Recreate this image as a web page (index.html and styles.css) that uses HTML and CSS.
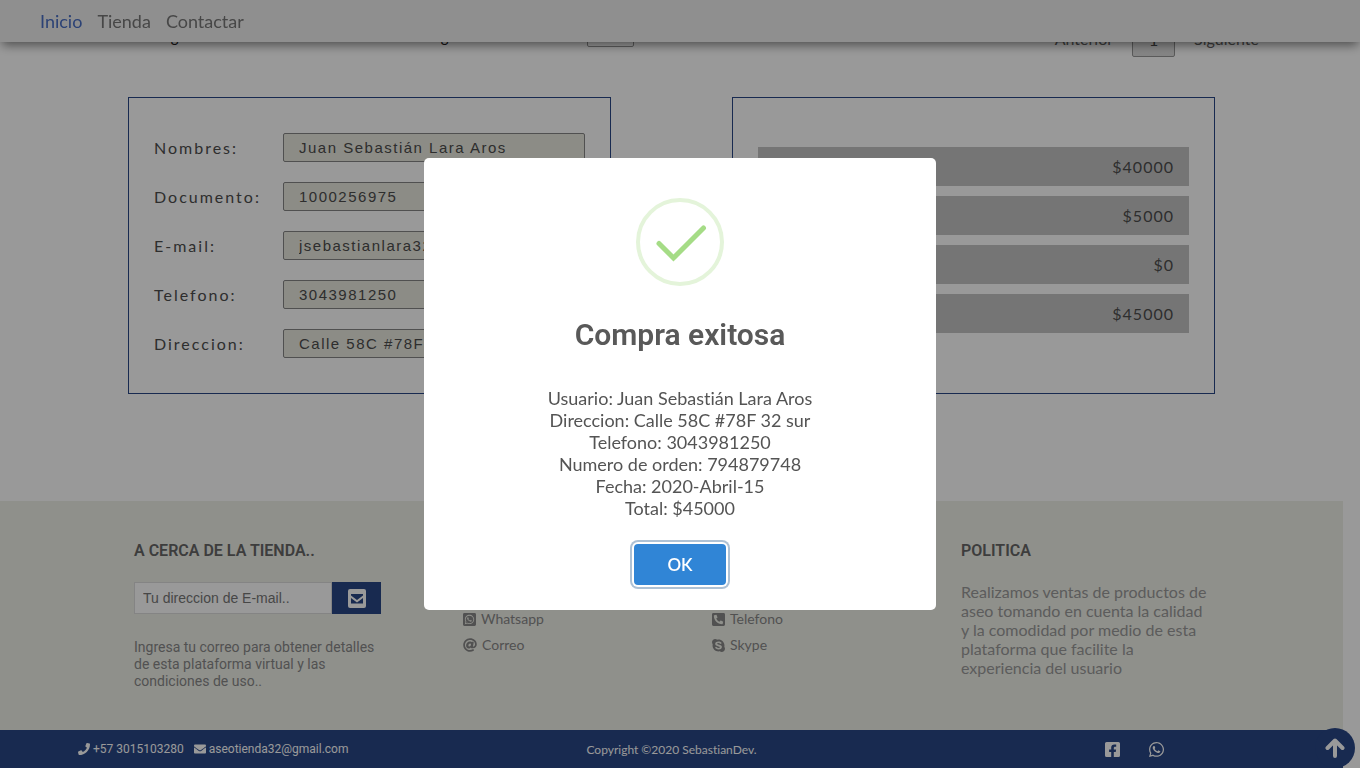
FILE: index.html
```html
<!DOCTYPE html>
<html lang="es">
<head>
<meta charset="utf-8">
<title>Tienda de aseo</title>
<link rel="stylesheet" href="styles.css">
</head>
<body>
<header class="navbar">
  <nav class="nav-links">
    <a class="nav-link active" href="#inicio">Inicio</a>
    <a class="nav-link" href="#tienda">Tienda</a>
    <a class="nav-link" href="#contactar">Contactar</a>
  </nav>
</header>

<main class="content">
  <div class="table-info">
    <span class="info-text">Registros</span>
    <span class="info-text">Registros</span>
    <label class="info-length"><input class="length-input" type="text" value="5" aria-label="Cantidad"> registros</label>
    <div class="pager">
      <a class="pager-link" href="#anterior">Anterior</a>
      <a class="pager-current" href="#pagina-1">1</a>
      <a class="pager-link" href="#siguiente">Siguiente</a>
    </div>
  </div>

  <div class="panels">
    <form class="panel">
      <div class="field"><label for="nombres">Nombres:</label><input id="nombres" type="text" value="Juan Sebastián Lara Aros"></div>
      <div class="field"><label for="documento">Documento:</label><input id="documento" type="text" value="1000256975"></div>
      <div class="field"><label for="email">E-mail:</label><input id="email" type="text" value="jsebastianlara32@gmail.com"></div>
      <div class="field"><label for="telefono">Telefono:</label><input id="telefono" type="text" value="3043981250"></div>
      <div class="field"><label for="direccion">Direccion:</label><input id="direccion" type="text" value="Calle 58C #78F 32 sur"></div>
    </form>
    <section class="panel totals">
      <div class="total-row">$40000</div>
      <div class="total-row">$5000</div>
      <div class="total-row">$0</div>
      <div class="total-row">$45000</div>
    </section>
  </div>
</main>

<footer class="footer">
  <div class="footer-grid">
    <section class="footer-about">
      <h4 class="footer-title">A CERCA DE LA TIENDA..</h4>
      <form class="subscribe">
        <input class="subscribe-input" type="email" placeholder="Tu direccion de E-mail.." aria-label="Tu direccion de E-mail">
        <button class="subscribe-button" type="button" aria-label="Enviar">
          <svg width="18" height="19" viewBox="0 0 18 19"><rect width="18" height="19" rx="2" fill="#fff"/><path d="M3 5h12v1.500L9 11 3 6.500zM3 9l6 4.500L15 9v5.500H3z" fill="#284686"/></svg>
        </button>
      </form>
      <p class="about-text">Ingresa tu correo para obtener detalles de esta plataforma virtual y las condiciones de uso..</p>
    </section>
    <section class="footer-contact">
      <ul class="links">
        <li><a href="#whatsapp"><svg class="icon-sm" viewBox="0 32 448 448"><path d="M224 122.800c-72.700 0-131.800 59.100-131.900 131.800 0 24.900 7 49.200 20.200 70.100l3.100 5-13.300 48.600 49.900-13.100 4.800 2.900c20.200 12 43.400 18.400 67.100 18.400h.1c72.600 0 133.300-59.100 133.300-131.800 0-35.200-15.200-68.300-40.100-93.200-25-25-58-38.700-93.200-38.700zm77.500 188.400c-3.300 9.300-19.100 17.700-26.700 18.800-12.600 1.900-22.400.9-47.500-9.900-39.700-17.200-65.700-57.200-67.700-59.800-2-2.600-16.200-21.500-16.200-41s10.200-29.100 13.900-33.100c3.600-4 7.900-5 10.600-5 2.600 0 5.300 0 7.600.1 2.400.1 5.700-.9 8.900 6.800 3.300 7.900 11.200 27.400 12.200 29.400s1.700 4.300.3 6.900c-7.600 15.200-15.700 14.600-11.600 21.600 15.300 26.300 30.600 35.400 53.900 47.100 4 2 6.300 1.700 8.600-1 2.300-2.600 9.900-11.600 12.500-15.500 2.600-4 5.300-3.300 8.900-2 3.600 1.300 23.100 10.900 27.100 12.900s6.600 3 7.600 4.600c.9 1.900.9 9.900-2.400 19.100zM400 32H48C21.500 32 0 53.500 0 80v352c0 26.500 21.500 48 48 48h352c26.500 0 48-21.500 48-48V80c0-26.500-21.500-48-48-48zM223.900 413.200c-26.600 0-52.700-6.700-75.800-19.300L64 416l22.500-82.200c-13.900-24-21.200-51.300-21.200-79.300C65.400 167.100 136.500 96 223.900 96c42.400 0 82.200 16.500 112.200 46.500 29.900 30 47.900 69.800 47.900 112.200 0 87.400-72.700 158.500-160.100 158.500z"/></svg>Whatsapp</a></li>
        <li><a href="#correo"><svg class="icon-md" viewBox="0 0 512 512"><path d="M256 8C118.941 8 8 118.919 8 256c0 137.059 110.919 248 248 248 48.154 0 95.342-14.140 135.408-40.223 12.005-7.815 14.625-24.288 5.552-35.372l-10.177-12.433c-7.671-9.371-21.179-11.667-31.373-5.129C325.920 429.757 291.314 440 256 440c-101.458 0-184-82.542-184-184S154.542 72 256 72c100.139 0 184 57.619 184 160 0 38.786-21.093 79.742-58.170 83.693-17.349-.454-16.910-12.857-13.476-30.024l23.433-121.110C394.653 149.750 383.308 136 368.225 136h-44.981a13.518 13.518 0 0 0-13.432 11.993l-.010.092c-14.697-17.901-40.448-21.775-59.971-21.775-74.580 0-137.831 62.234-137.831 151.460 0 65.303 36.785 105.870 96 105.870 26.984 0 57.369-15.637 74.991-38.333 9.522 34.104 40.613 34.104 70.710 34.104C462.609 379.410 504 307.798 504 232 504 95.653 394.023 8 256 8zm-21.680 304.430c-22.249 0-36.070-15.623-36.070-40.771 0-44.993 30.779-72.729 58.630-72.729 22.292 0 35.601 15.241 35.601 40.770 0 45.061-33.875 72.730-58.161 72.730z"/></svg>Correo</a></li>
      </ul>
    </section>
    <section class="footer-contact">
      <ul class="links">
        <li><a href="#telefono"><svg class="icon-sm" viewBox="0 32 448 448"><path transform="matrix(-1 0 0 1 448 0)" d="M400 32H48C21.490 32 0 53.490 0 80v352c0 26.510 21.490 48 48 48h352c26.510 0 48-21.490 48-48V80c0-26.510-21.490-48-48-48zM94 416c-7.033 0-13.057-4.873-14.616-11.627l-14.998-65a15 15 0 0 1 8.707-17.160l69.998-29.999a15 15 0 0 1 17.518 4.289l30.997 37.885c48.944-22.963 88.297-62.858 110.781-110.780l-37.886-30.997a15 15 0 0 1-4.289-17.518l30-69.998a15 15 0 0 1 17.160-8.707l65 14.998A15 15 0 0 1 384 126c0 160.292-129.945 290-290 290z"/></svg>Telefono</a></li>
        <li><a href="#skype"><svg class="icon-sm" viewBox="0 32 448 448"><path d="M424.700 299.800c2.900-14 4.700-28.900 4.700-43.800 0-113.500-91.900-205.300-205.300-205.300-14.900 0-29.700 1.700-43.800 4.700C161.300 40.700 137.700 32 112 32 50.200 32 0 82.200 0 144c0 25.700 8.700 49.300 23.300 68.200-2.900 14-4.700 28.900-4.700 43.800 0 113.500 91.900 205.300 205.300 205.300 14.900 0 29.700-1.700 43.800-4.700 19 14.600 42.600 23.300 68.200 23.300 61.800 0 112-50.200 112-112 .1-25.600-8.600-49.200-23.200-68.100zm-194.600 91.500c-65.600 0-120.500-29.200-120.500-65 0-16 9-30.600 29.500-30.600 31.200 0 34.100 44.900 88.100 44.900 25.700 0 42.300-11.400 42.300-26.300 0-18.700-16-21.600-42-28-62.500-15.400-117.800-22-117.800-87.200 0-59.200 58.600-81.100 109.100-81.100 55.100 0 110.800 21.900 110.800 55.400 0 16.900-11.400 31.800-30.300 31.800-28.300 0-29.200-33.500-75-33.500-25.700 0-42 7-42 22.500 0 19.800 20.800 21.800 69.100 33 41.400 9.300 90.700 26.800 90.700 77.600 0 59.100-57.100 86.500-112 86.500z"/></svg>Skype</a></li>
      </ul>
    </section>
    <section class="footer-policy">
      <h4 class="footer-title">POLITICA</h4>
      <p class="policy-text">Realizamos ventas de productos de aseo tomando en cuenta la calidad y la comodidad por medio de esta plataforma que facilite la experiencia del usuario</p>
    </section>
  </div>
  <div class="bottom-bar">
    <div class="bottom-contact">
      <a href="tel:+573015103280"><svg class="icon-xs" viewBox="0 0 512 512"><path d="M493.400 24.600l-104-24c-11.300-2.600-22.900 3.300-27.500 13.900l-48 112c-4.200 9.800-1.400 21.300 6.900 28l60.600 49.600c-36 76.700-98.900 140.500-177.200 177.200l-49.600-60.600c-6.800-8.300-18.200-11.100-28-6.900l-112 48C3.900 366.500-2 378.100.6 389.400l24 104C27.100 504.200 36.700 512 48 512c256.100 0 464-207.500 464-464 0-11.200-7.700-20.900-18.600-23.400z"/></svg>+57 3015103280</a>
      <a href="mailto:aseotienda32@gmail.com"><svg class="icon-xs" viewBox="0 0 512 512"><path d="M502.300 190.800c3.900-3.100 9.700-.2 9.700 4.700V400c0 26.500-21.500 48-48 48H48c-26.500 0-48-21.500-48-48V195.600c0-5 5.700-7.800 9.700-4.700 22.400 17.400 52.100 39.500 154.100 113.600 21.100 15.400 56.700 47.800 92.200 47.600 35.700.3 72-32.800 92.300-47.600 102-74.100 131.600-96.300 154-113.700zM256 320c23.200.4 56.600-29.200 73.400-41.400 132.700-96.300 142.800-104.700 173.400-128.700 5.800-4.500 9.200-11.500 9.200-18.900v-19c0-26.500-21.500-48-48-48H48c-26.500 0-48 21.500-48 48v19c0 7.400 3.400 14.300 9.200 18.900 30.600 23.900 40.700 32.400 173.400 128.700 16.800 12.200 50.200 41.800 73.400 41.400z"/></svg>aseotienda32@gmail.com</a>
    </div>
    <p class="copyright">Copyright ©2020 SebastianDev.</p>
    <div class="social">
      <a href="#facebook" aria-label="Facebook"><svg class="icon-lg" viewBox="0 32 448 448"><path d="M400 32H48A48 48 0 0 0 0 80v352a48 48 0 0 0 48 48h137.250V327.690h-63V256h63v-54.640c0-62.150 37-96.480 93.670-96.480 27.140 0 55.520 4.840 55.520 4.840v61h-31.270c-30.810 0-40.420 19.120-40.420 38.730V256h68.780l-11 71.690h-57.780V480H400a48 48 0 0 0 48-48V80a48 48 0 0 0-48-48z"/></svg></a>
      <a href="#whatsapp" aria-label="Whatsapp"><svg class="icon-lg" viewBox="0 32 448 448"><path d="M380.900 97.100C339 55.100 283.200 32 223.900 32c-122.400 0-222 99.600-222 222 0 39.100 10.200 77.300 29.600 111L0 480l117.700-30.900c32.400 17.700 68.900 27 106.100 27h.1c122.300 0 224.100-99.600 224.100-222 0-59.300-25.200-115-67.100-157zm-157 341.600c-33.200 0-65.700-8.900-94-25.700l-6.700-4-69.800 18.300L72 359.200l-4.400-7c-18.500-29.400-28.200-63.300-28.200-98.200 0-101.700 82.800-184.500 184.600-184.500 49.300 0 95.600 19.200 130.400 54.100 34.800 34.900 56.200 81.200 56.100 130.500 0 101.800-84.900 184.600-186.600 184.600zm101.200-138.200c-5.500-2.800-32.800-16.200-37.900-18-5.100-1.900-8.800-2.800-12.500 2.800-3.700 5.600-14.300 18-17.600 21.800-3.200 3.700-6.500 4.200-12 1.400-32.600-16.300-54-29.100-75.500-66-5.700-9.800 5.700-9.100 16.300-30.300 1.800-3.700.9-6.900-.5-9.700-1.400-2.800-12.500-30.100-17.100-41.200-4.500-10.800-9.100-9.300-12.500-9.500-3.200-.2-6.900-.2-10.600-.2-3.700 0-9.700 1.400-14.800 6.900-5.100 5.600-19.400 19-19.400 46.300 0 27.300 19.900 53.700 22.600 57.400 2.800 3.700 39.100 59.700 94.800 83.800 35.200 15.200 49 16.500 66.600 13.900 10.700-1.600 32.800-13.400 37.400-26.400 4.600-13 4.600-24.100 3.200-26.400-1.300-2.500-5-3.900-10.500-6.600z"/></svg></a>
    </div>
  </div>
</footer>

<a class="to-top" href="#inicio" aria-label="Subir"><svg width="20" height="20" viewBox="0 0 20 20" fill="none" stroke="#fff" stroke-width="4" stroke-linecap="round" stroke-linejoin="round"><path d="M10 18V3M2.500 10 10 2.500 17.500 10"/></svg></a>

<div class="overlay">
  <div class="modal" role="dialog" aria-modal="true" aria-labelledby="modal-title">
    <svg class="modal-icon" viewBox="0 0 88 88" fill="none"><circle cx="44" cy="44" r="42" stroke="#e4f4da" stroke-width="4"/><path d="M23 45.500 37.500 60 67.500 30" stroke="#a5dc86" stroke-width="5" stroke-linecap="round"/></svg>
    <h2 class="modal-title" id="modal-title">Compra exitosa</h2>
    <div class="modal-text">Usuario: Juan Sebastián Lara Aros<br>Direccion: Calle 58C #78F 32 sur<br>Telefono: 3043981250<br>Numero de orden: 794879748<br>Fecha: 2020-Abril-15<br>Total: $45000</div>
    <button class="modal-button" type="button">OK</button>
  </div>
</div>
</body>
</html>
```

FILE: styles.css
```css
* { box-sizing: border-box; }

body {
  margin: 0;
  padding-right: 17px;
  background: #fff;
  color: #4d4d4d;
  font-family: Lato, "Liberation Sans", sans-serif;
  font-variant-ligatures: none;
  overflow: hidden;
}

a { color: inherit; text-decoration: none; }
h2, h4, p, ul { margin: 0; padding: 0; }
svg { display: block; fill: currentColor; flex: none; }

.navbar {
  position: fixed;
  top: 0;
  left: 0;
  right: 0;
  z-index: 1;
  padding: 10px 40px;
  background: #eee;
  box-shadow: 0 5px 10px -2px rgba(0, 0, 0, .5);
}

.nav-links { display: flex; gap: 15px; font-size: 18px; line-height: 22px; }
.nav-link { color: #777; }
.nav-link.active { color: #4a6fc4; }

.content { padding: 0 128px 107px; }

.table-info {
  display: grid;
  grid-template-columns: 270px 163px 1fr auto;
  align-items: end;
  height: 57px;
  margin-right: -44px;
  padding-left: 26px;
  font-size: 15px;
  line-height: 20px;
}

.info-text { padding-bottom: 11px; color: #222; }
.info-length { display: flex; align-items: center; gap: 10px; padding-bottom: 10px; color: #222; }
.length-input { width: 47px; height: 30px; border: 1px solid #999; border-radius: 2px; background: transparent; }

.pager { display: flex; gap: 19px; font-size: 16px; line-height: 32px; }
.pager-current {
  width: 43px;
  height: 34px;
  border: 1px solid #979797;
  border-radius: 2px;
  background: linear-gradient(#fff, #dcdcdc);
  text-align: center;
}
.pager-link { color: #666; }

.panels { display: grid; grid-template-columns: 1fr 1fr; gap: 121px; margin-top: 40px; }

.panel {
  display: flex;
  flex-direction: column;
  gap: 20px;
  padding: 35px 25px;
  border: 1px solid #284686;
  font-size: 16px;
  letter-spacing: 2px;
}

.field { display: flex; align-items: center; }
.field label { width: 129px; }
.field input {
  flex: 1;
  min-width: 0;
  height: 29px;
  padding: 0 15px;
  border: 1px solid #868686;
  border-radius: 2px;
  background: #e9e9df;
  color: #4d4d4d;
  font-family: "Liberation Sans", Arial, sans-serif;
  font-size: 15px;
  letter-spacing: .1em;
}

.totals { gap: 10px; padding-top: 49px; letter-spacing: 1px; }
.total-row {
  padding: 10px 15px;
  background: #c4c4c4;
  line-height: 19px;
  text-align: right;
}

.footer { background: #eff0e8; }
.footer-grid {
  display: grid;
  grid-template-columns: 329fr 249fr 249fr 248fr;
  padding: 40px 134px;
}

.footer-title {
  color: #666;
  font-family: Roboto, sans-serif;
  font-size: 16px;
  font-weight: 600;
  line-height: 19px;
}

.footer-about { width: 247px; }
.subscribe { display: flex; height: 32px; margin: 22px 0 25px; }
.subscribe-input {
  flex: 1;
  min-width: 0;
  padding: 0 8px;
  border: 1px solid #ddd;
  background: #fff;
  font-family: "Liberation Sans", Arial, sans-serif;
  font-size: 14px;
}
.subscribe-input::placeholder { color: #777; }
.subscribe-button {
  display: flex;
  align-items: center;
  justify-content: center;
  width: 49px;
  padding: 0;
  border: 0;
  background: #284686;
}
.about-text { color: #888; font-family: Roboto, sans-serif; font-size: 14px; line-height: 17px; }

.links { margin-top: 65px; list-style: none; color: #888; font-size: 14px; line-height: 26px; }
.links a { display: flex; align-items: center; gap: 5px; }
.icon-xs { width: 12px; height: 12px; }
.icon-sm { width: 13px; height: 13px; }
.icon-md { width: 14px; height: 14px; }
.icon-lg { width: 15px; height: 15px; }

.policy-text { margin-top: 22px; color: #999; font-size: 16px; line-height: 19px; }

.bottom-bar {
  display: grid;
  grid-template-columns: 1fr auto 1fr;
  align-items: center;
  height: 38px;
  padding: 0 78px;
  background: #284686;
  color: #fff;
}
.bottom-contact { display: flex; gap: 10px; font-family: Roboto, sans-serif; font-size: 12px; }
.bottom-contact a { display: flex; align-items: center; gap: 3px; }
.copyright { font-size: 12px; }
.social { display: flex; justify-content: flex-end; gap: 29px; padding-right: 101px; }

.to-top {
  position: fixed;
  right: 5px;
  bottom: 0;
  display: flex;
  align-items: center;
  justify-content: center;
  width: 40px;
  height: 40px;
  border-radius: 50%;
  background: #284686;
}
.to-top svg { fill: none; }

.overlay {
  position: fixed;
  inset: 0;
  z-index: 2;
  display: flex;
  align-items: center;
  justify-content: center;
  background: rgba(0, 0, 0, .4);
}

.modal {
  display: flex;
  flex-direction: column;
  align-items: center;
  width: 512px;
  padding: 40px 20px 25px;
  border-radius: 5px;
  background: #fff;
  text-align: center;
}
.modal-icon { width: 88px; height: 88px; fill: none; }
.modal-title {
  margin-top: 31px;
  color: #595959;
  font-family: Roboto, sans-serif;
  font-size: 30px;
  font-weight: 600;
  line-height: 36px;
}
.modal-text { margin-top: 34px; color: #545454; font-size: 18px; line-height: 22px; }
.modal-button {
  margin-top: 25px;
  padding: 10px 33px;
  border: 0;
  border-radius: 4px;
  background: #3085d6;
  color: #fff;
  box-shadow: 0 0 0 2px #fff, 0 0 0 4px rgba(50, 100, 150, .4);
  font-family: Lato, sans-serif;
  font-size: 17px;
  font-weight: 600;
  line-height: 21px;
}
```
